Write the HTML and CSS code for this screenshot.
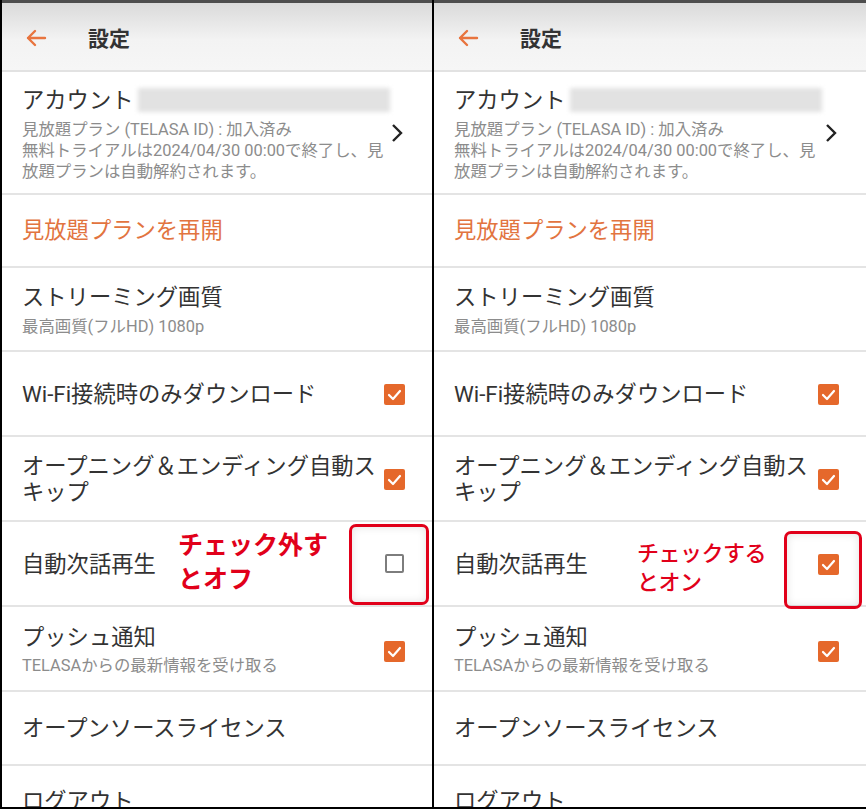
FILE: index.html
```html
<!DOCTYPE html>
<html lang="ja">
<head>
  <meta charset="UTF-8">
  <title>設定</title>
  <link rel="stylesheet" href="styles.css">
</head>
<body>

<div class="screens">

  <!-- 左: 自動次話再生 オフ -->
  <div class="panel left">
    <div class="topbar">
      <svg class="back" width="24" height="24" viewBox="0 0 24 24"><path d="M21 12H4M11 5l-7 7 7 7" fill="none" stroke="#e8743e" stroke-width="2.4" stroke-linecap="round" stroke-linejoin="round"/></svg>
      <span class="title">設定</span>
    </div>

    <div class="row account">
      <div class="texts">
        <div class="label">アカウント<span class="mail"></span></div>
        <div class="sub">見放題プラン (TELASA ID) : 加入済み<br>無料トライアルは2024/04/30 00:00で終了し、見<br>放題プランは自動解約されます。</div>
      </div>
      <svg class="chev" width="12" height="20" viewBox="0 0 12 20"><path d="M2 2l8 8-8 8" fill="none" stroke="#222" stroke-width="2.4"/></svg>
    </div>

    <div class="row plain"><div class="label orange">見放題プランを再開</div></div>

    <div class="row quality">
      <div class="texts">
        <div class="label">ストリーミング画質</div>
        <div class="sub">最高画質(フルHD) 1080p</div>
      </div>
    </div>

    <div class="row check">
      <div class="texts"><div class="label">Wi-Fi接続時のみダウンロード</div></div>
      <span class="box on"><svg viewBox="0 0 21 21"><path d="M5 11l4 4 7-8" fill="none" stroke="#fff" stroke-width="2.2" stroke-linecap="round" stroke-linejoin="round"/></svg></span>
    </div>

    <div class="row check">
      <div class="texts"><div class="label">オープニング＆エンディング自動ス<br>キップ</div></div>
      <span class="box on"><svg viewBox="0 0 21 21"><path d="M5 11l4 4 7-8" fill="none" stroke="#fff" stroke-width="2.2" stroke-linecap="round" stroke-linejoin="round"/></svg></span>
    </div>

    <div class="row check autoplay">
      <div class="texts"><div class="label">自動次話再生</div></div>
      <span class="box"></span>
      <div class="note off">チェック外す<br>とオフ</div>
      <div class="mark off"></div>
    </div>

    <div class="row check push">
      <div class="texts">
        <div class="label">プッシュ通知</div>
        <div class="sub">TELASAからの最新情報を受け取る</div>
      </div>
      <span class="box on"><svg viewBox="0 0 21 21"><path d="M5 11l4 4 7-8" fill="none" stroke="#fff" stroke-width="2.2" stroke-linecap="round" stroke-linejoin="round"/></svg></span>
    </div>

    <div class="row plain oss"><div class="label">オープンソースライセンス</div></div>
    <div class="row plain"><div class="label">ログアウト</div></div>
  </div>

  <!-- 右: 自動次話再生 オン -->
  <div class="panel right">
    <div class="topbar">
      <svg class="back" width="24" height="24" viewBox="0 0 24 24"><path d="M21 12H4M11 5l-7 7 7 7" fill="none" stroke="#e8743e" stroke-width="2.4" stroke-linecap="round" stroke-linejoin="round"/></svg>
      <span class="title">設定</span>
    </div>

    <div class="row account">
      <div class="texts">
        <div class="label">アカウント<span class="mail"></span></div>
        <div class="sub">見放題プラン (TELASA ID) : 加入済み<br>無料トライアルは2024/04/30 00:00で終了し、見<br>放題プランは自動解約されます。</div>
      </div>
      <svg class="chev" width="12" height="20" viewBox="0 0 12 20"><path d="M2 2l8 8-8 8" fill="none" stroke="#222" stroke-width="2.4"/></svg>
    </div>

    <div class="row plain"><div class="label orange">見放題プランを再開</div></div>

    <div class="row quality">
      <div class="texts">
        <div class="label">ストリーミング画質</div>
        <div class="sub">最高画質(フルHD) 1080p</div>
      </div>
    </div>

    <div class="row check">
      <div class="texts"><div class="label">Wi-Fi接続時のみダウンロード</div></div>
      <span class="box on"><svg viewBox="0 0 21 21"><path d="M5 11l4 4 7-8" fill="none" stroke="#fff" stroke-width="2.2" stroke-linecap="round" stroke-linejoin="round"/></svg></span>
    </div>

    <div class="row check">
      <div class="texts"><div class="label">オープニング＆エンディング自動ス<br>キップ</div></div>
      <span class="box on"><svg viewBox="0 0 21 21"><path d="M5 11l4 4 7-8" fill="none" stroke="#fff" stroke-width="2.2" stroke-linecap="round" stroke-linejoin="round"/></svg></span>
    </div>

    <div class="row check autoplay">
      <div class="texts"><div class="label">自動次話再生</div></div>
      <span class="box on"><svg viewBox="0 0 21 21"><path d="M5 11l4 4 7-8" fill="none" stroke="#fff" stroke-width="2.2" stroke-linecap="round" stroke-linejoin="round"/></svg></span>
      <div class="note on">チェックする<br>とオン</div>
      <div class="mark on"></div>
    </div>

    <div class="row check push">
      <div class="texts">
        <div class="label">プッシュ通知</div>
        <div class="sub">TELASAからの最新情報を受け取る</div>
      </div>
      <span class="box on"><svg viewBox="0 0 21 21"><path d="M5 11l4 4 7-8" fill="none" stroke="#fff" stroke-width="2.2" stroke-linecap="round" stroke-linejoin="round"/></svg></span>
    </div>

    <div class="row plain oss"><div class="label">オープンソースライセンス</div></div>
    <div class="row plain"><div class="label">ログアウト</div></div>
  </div>

</div>

</body>
</html>
```

FILE: styles.css
```css
body{margin:0;background:#000;font-family:Roboto,"Noto Sans CJK JP",sans-serif;color:#333;overflow:hidden}
.screens{display:flex;gap:2px;padding-left:2px;height:807px}
.panel{background:#fff;overflow:hidden;position:relative}
.panel.left{width:430px}
.panel.right{flex:1}

/* ヘッダー */
.topbar{height:67px;border-top:3px solid #4d4d4d;border-bottom:2px solid #e2e2e2;background:linear-gradient(#dadada,#f3f3f3 55%,#f6f6f6);display:flex;align-items:center;padding-left:22px}
.back{display:block;margin-top:2px}
.title{margin-left:40px;font-size:21px;font-weight:700;color:#333;margin-top:1px}

/* 設定項目 */
.row{display:flex;align-items:center;padding:0 27px 0 20px;border-bottom:2px solid #e4e4e4;box-sizing:border-box;position:relative}
.texts{flex:1;min-width:0;white-space:nowrap}
.label{font-size:22.3px;line-height:27px;color:#333}
.sub{font-size:16.4px;line-height:21px;color:#8c8c8c;margin-top:5px}
.orange{color:#e2743f}
.account{height:123px;padding-top:3px;padding-right:29px}
.account .label{display:flex;align-items:center}
.mail{width:252px;height:24px;margin-left:4px;background:#e2e2e2;filter:blur(2px)}
.chev{display:block;margin-top:-2px}
.plain{height:73px}
.oss{height:74px}
.quality{height:84px;padding-top:3px}
.check{height:85px}
.push{padding-top:3px}
.check .label{line-height:26px}

/* チェックボックス */
.box{width:21px;height:21px;border-radius:2px;box-sizing:border-box;border:2px solid #7d7d7d;background:#fff;margin-left:12px;flex:none}
.box.on{border:0;background:#e5682b}
.box svg{display:block;width:21px;height:21px}
.check .box{margin-top:2px}
.left .autoplay .box{width:19px;height:19px;margin-right:1px;margin-top:0}

/* 注記 */
.note{position:absolute;color:#e1001a}
.note.off{left:176px;top:7px;font-size:25px;line-height:34px;font-weight:700}
.note.on{left:203px;top:17px;font-size:22px;line-height:29px;font-weight:500;letter-spacing:-.5px}
.mark{position:absolute;border:3.5px solid #e1001a;border-radius:7px;box-sizing:border-box;box-shadow:inset 0 0 8px rgba(0,0,0,.12)}
.mark.off{left:347px;top:2px;width:80px;height:81px}
.mark.on{left:350px;top:9px;width:78px;height:78px;z-index:1}
```
